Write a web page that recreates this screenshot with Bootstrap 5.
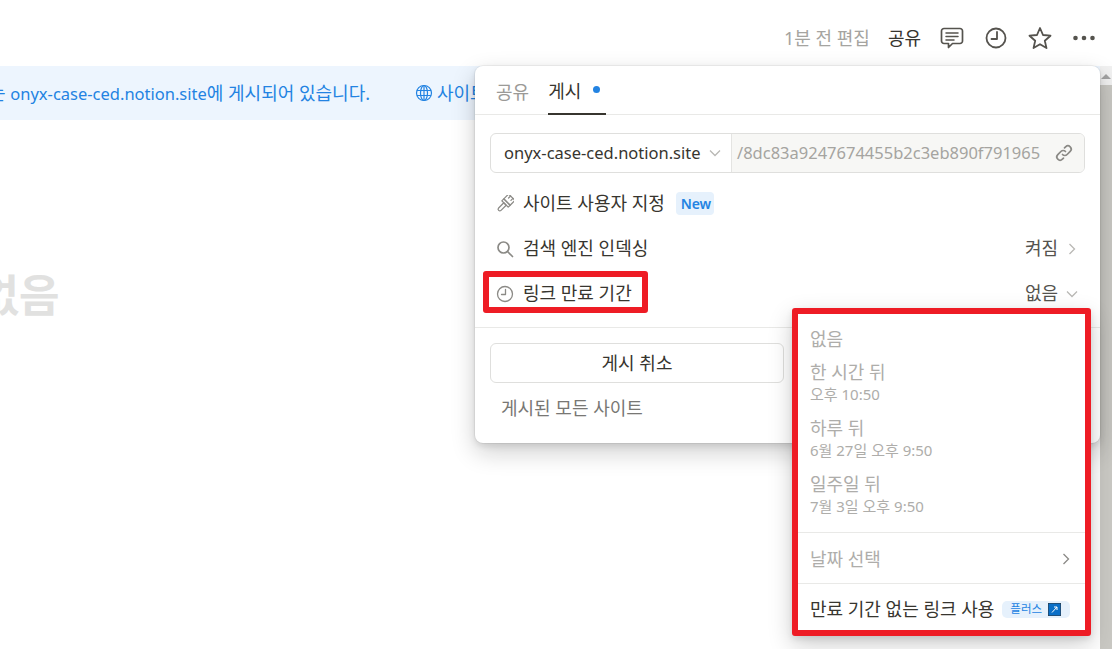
<!DOCTYPE html>
<html lang="ko">
<head>
  <meta charset="UTF-8" />
  <meta name="viewport" content="width=device-width, initial-scale=1.0"/>
  <title>게시</title>
  <link href="https://cdn.jsdelivr.net/npm/bootstrap@5.3.0/dist/css/bootstrap.min.css" rel="stylesheet">
  <style>
    html, body { margin: 0; height: 100%; overflow: hidden; background: #fff; }
    body {
      font-family: "Noto Sans", "Noto Sans CJK KR", sans-serif;
      font-size: 18px;
      color: #37352f;
    }
    .latin-text { font-size: 16.5px; }
    .page-shell { position: relative; width: 1112px; height: 649px; overflow: hidden; }
    .top-bar { height: 66px; padding: 10px 15px 0 0; gap: 18px; }
    .edited-text { color: #a5a4a0; }
    .share-link { color: #37352f; }
    .top-icon { width: 26px; height: 26px; color: #55534e; }
    .under-top { height: 583px; }
    .page-main { min-width: 0; overflow: hidden; }
    .publish-banner { height: 54px; background: #edf5fe; color: #2383e2; white-space: nowrap; overflow: hidden; }
    .banner-text { margin-left: -11px; width: 426px; flex: none; }
    .banner-icon { width: 18px; height: 18px; }
    .doc-title {
      margin: 147px 0 0 -114px;
      font-size: 44px;
      line-height: 56px;
      font-weight: 700;
      color: #e1e1e0;
      white-space: nowrap;
    }
    .fake-scroll { width: 12px; background: #c9c8c3; position: relative; }
    .fake-scroll-top { height: 19px; background: #f1f1f1; display: flex; justify-content: center; padding-top: 8px; }
    .scroll-arrow { width: 0; height: 0; border: 5px solid transparent; border-top: 0; border-bottom: 5px solid #a3a3a3; }

    .publish-pop {
      position: absolute; left: 475px; top: 66px; width: 625px; height: 377px;
      background: #fff; border-radius: 8px;
      box-shadow: 0 0 0 1px rgba(15,15,15,.05), 0 3px 6px rgba(15,15,15,.1), 0 9px 24px rgba(15,15,15,.2);
    }
    .pop-tabs { height: 49px; padding: 0 21px; gap: 19px; border-bottom: 1px solid #e9e9e7; }
    .pop-tab { height: 49px; color: #9b9a97; padding-top: 3px; }
    .pop-tab-on { color: #37352f; border-bottom: 2px solid #37352f; width: 58px; }
    .tab-dot { width: 7px; height: 7px; background: #2383e2; border-radius: 50%; margin-left: 12px; margin-top: -4px; }
    .url-field { margin: 18px 15px 0; height: 40px; border: 1px solid #dfdfdd; border-radius: 6px; overflow: hidden; }
    .url-domain { width: 241px; padding-left: 13px; padding-right: 9px; border-right: 1px solid #e4e4e2; flex: none; white-space: nowrap; }
    .url-path { background: #f7f7f5; color: #a5a4a0; padding: 0 10px 0 5px; white-space: nowrap; overflow: hidden; }
    .opt-rows { padding: 8px 21px 0 21px; }
    .opt-row { height: 45px; }
    .opt-icon { width: 18px; height: 18px; color: #8b8a86; margin-right: 9px; flex: none; }
    .chev { width: 14px; height: 14px; color: #b9b8b5; margin-left: 7px; flex: none; }
    .new-tag { background: #e6f1fc; color: #2383e2; font-size: 14px; font-weight: 600; border-radius: 4px; padding: 0 5px; margin-left: 11px; line-height: 23px; width: 38px; text-align: center; letter-spacing: -0.2px; }
    .side-value { color: #55534e; }
    .pop-foot { margin-top: 11px; border-top: 1px solid #e9e9e7; padding: 15px 0 0 15px; }
    .unpublish-btn {
      width: 294px; height: 40px; padding: 0; font-size: 18px; color: #37352f;
      border: 1px solid #dfdfdd; border-radius: 6px; background: #fff;
    }
    .all-sites { color: #787774; padding: 12px 0 0 11px; }

    .expire-pop {
      position: absolute; left: 792px; top: 308px; width: 299px; height: 328px;
      background: #fff; border: 6px solid #ee1c25; border-radius: 3px;
      box-shadow: 0 3px 6px rgba(15,15,15,.1), 0 9px 24px rgba(15,15,15,.2);
    }
    .expire-list { padding: 13px 0 0 12px; color: #aeadaa; height: 218px; }
    .expire-item { margin-bottom: 11px; line-height: 25px; }
    .expire-none { margin-bottom: 8px; }
    .expire-sub { font-size: 15px; line-height: 22px; margin-top: -2px; }
    .expire-row { height: 51px; border-top: 1px solid #e9e9e7; padding: 0 12px; }
    .date-pick { color: #aeadaa; padding-top: 2px; }
    .plus-tag { background: #e6f1fc; color: #2383e2; font-size: 11.5px; border-radius: 5px; height: 17px; padding: 0 9px 0 8px; margin-left: 8px; gap: 6px; white-space: nowrap; }
    .plus-square { width: 13px; height: 13px; flex: none; }
    .red-frame { position: absolute; left: 483px; top: 271px; width: 165px; height: 42px; border: 6px solid #ee1c25; border-radius: 3px; }
  </style>
</head>
<body>
<div class="page-shell">
  <div class="top-bar d-flex align-items-center justify-content-end">
    <span class="edited-text">1분 전 편집</span>
    <span class="share-link">공유</span>
    <svg class="top-icon" viewBox="0 0 26 26" fill="none" stroke="currentColor" stroke-width="1.700" stroke-linejoin="round" stroke-linecap="round"><path d="M5 3.500h16a2.500 2.500 0 0 1 2.500 2.500v10a2.500 2.500 0 0 1-2.500 2.500h-7.500l-4 4v-4H5A2.500 2.500 0 0 1 2.500 16V6A2.500 2.500 0 0 1 5 3.500z"/><path d="M7 8h12M7 11.500h12M7 15h8" stroke-width="1.500"/></svg>
    <svg class="top-icon" viewBox="0 0 26 26" fill="none" stroke="currentColor" stroke-width="1.800" stroke-linecap="round" stroke-linejoin="round"><circle cx="13" cy="13" r="9.500"/><path d="M14 7v7H8.500"/></svg>
    <svg class="top-icon" viewBox="0 0 26 26" fill="none" stroke="currentColor" stroke-width="1.800" stroke-linejoin="round"><path d="M13 3l3 7 7.500.700-5.700 5 1.700 7.400-6.500-3.900-6.500 3.900 1.700-7.400-5.700-5L10 10z"/></svg>
    <svg class="top-icon" viewBox="0 0 26 26" fill="currentColor"><circle cx="4.500" cy="13" r="2.300"/><circle cx="13" cy="13" r="2.300"/><circle cx="21.500" cy="13" r="2.300"/></svg>
  </div>
  <div class="under-top d-flex">
    <div class="page-main flex-grow-1">
      <div class="publish-banner d-flex align-items-center">
        <span class="banner-text">는 <span class="latin-text">onyx-case-ced.notion.site</span>에 게시되어 있습니다.</span>
        <svg class="banner-icon me-1" viewBox="0 0 18 18" fill="none" stroke="currentColor" stroke-width="1.200"><circle cx="9" cy="9" r="7.500"/><ellipse cx="9" cy="9" rx="3.500" ry="7.500"/><path d="M9 1.500v15M2 6.500h14M2 11.500h14"/></svg>
        <span>사이트 보기</span>
      </div>
      <div class="doc-title">제목 없음</div>
    </div>
    <div class="fake-scroll flex-shrink-0">
      <div class="fake-scroll-top"><div class="scroll-arrow"></div></div>
    </div>
  </div>

  <div class="publish-pop">
    <div class="pop-tabs d-flex">
      <div class="pop-tab d-flex align-items-center">공유</div>
      <div class="pop-tab pop-tab-on d-flex align-items-center flex-shrink-0">게시<span class="tab-dot"></span></div>
    </div>
    <div class="url-field d-flex">
      <div class="url-domain d-flex align-items-center justify-content-between">
        <span class="latin-text">onyx-case-ced.notion.site</span>
        <svg class="chev m-0" viewBox="0 0 14 14" fill="none" stroke="currentColor" stroke-width="1.300"><path d="M2 4.500l5 5 5-5"/></svg>
      </div>
      <div class="url-path flex-grow-1 d-flex align-items-center justify-content-between">
        <span class="latin-text">/8dc83a9247674455b2c3eb890f791965</span>
        <svg width="20" height="20" viewBox="0 0 20 20" fill="none" stroke="#8b8a86" stroke-width="1.700" stroke-linecap="round" class="flex-shrink-0"><path d="M8.500 11.500a3.200 3.200 0 0 0 4.600 0l3.100-3.100a3.250 3.250 0 0 0-4.600-4.600l-1.100 1.100"/><path d="M11.500 8.500a3.200 3.200 0 0 0-4.600 0l-3.100 3.100a3.250 3.250 0 0 0 4.600 4.600l1.100-1.100"/></svg>
      </div>
    </div>
    <div class="opt-rows">
      <div class="opt-row d-flex align-items-center">
        <svg class="opt-icon" viewBox="1 1 16 16" fill="none" stroke="currentColor" stroke-width="1.100" stroke-linejoin="round" stroke-linecap="round"><g transform="rotate(45 9 9)"><path d="M5 .5h8v6H5z"/><path d="M7.500.5v2.500M10.500.5v2.500"/><path d="M5 6.500h8v2.500H5z"/><path d="M7.500 9h3v6.500a1.500 1.500 0 0 1-3 0z"/></g></svg>
        <span>사이트 사용자 지정</span>
        <span class="new-tag">New</span>
      </div>
      <div class="opt-row d-flex align-items-center">
        <svg class="opt-icon" viewBox="0 0 18 18" fill="none" stroke="currentColor" stroke-width="1.700" stroke-linecap="round"><circle cx="7.500" cy="7.500" r="5.500"/><path d="M11.500 11.500l5 5"/></svg>
        <span class="flex-grow-1">검색 엔진 인덱싱</span>
        <span class="side-value">켜짐</span>
        <svg class="chev" viewBox="0 0 14 14" fill="none" stroke="currentColor" stroke-width="1.300"><path d="M4.500 2l5 5-5 5"/></svg>
      </div>
      <div class="opt-row d-flex align-items-center">
        <svg class="opt-icon" viewBox="0 0 18 18" fill="none" stroke="currentColor" stroke-width="1.300" stroke-linecap="round" stroke-linejoin="round"><circle cx="9" cy="9" r="7.500"/><path d="M9.500 4.500v5H5.500"/></svg>
        <span class="flex-grow-1">링크 만료 기간</span>
        <span class="side-value">없음</span>
        <svg class="chev" viewBox="0 0 14 14" fill="none" stroke="currentColor" stroke-width="1.300"><path d="M2 4.500l5 5 5-5"/></svg>
      </div>
    </div>
    <div class="pop-foot">
      <button type="button" class="btn unpublish-btn">게시 취소</button>
      <div class="all-sites">게시된 모든 사이트</div>
    </div>
  </div>

  <div class="red-frame"></div>

  <div class="expire-pop">
    <div class="expire-list">
      <div class="expire-item expire-none">없음</div>
      <div class="expire-item">한 시간 뒤<div class="expire-sub">오후 10:50</div></div>
      <div class="expire-item">하루 뒤<div class="expire-sub">6월 27일 오후 9:50</div></div>
      <div class="expire-item">일주일 뒤<div class="expire-sub">7월 3일 오후 9:50</div></div>
    </div>
    <div class="expire-row date-pick d-flex align-items-center justify-content-between">
      <span>날짜 선택</span>
      <svg class="chev" viewBox="0 0 14 14" fill="none" stroke="#8b8a86" stroke-width="1.300"><path d="M4.500 2l5 5-5 5"/></svg>
    </div>
    <div class="expire-row d-flex align-items-center">
      <span>만료 기간 없는 링크 사용</span>
      <span class="plus-tag d-inline-flex align-items-center">플러스
        <svg class="plus-square" viewBox="0 0 13 13"><rect width="13" height="13" fill="#0a6fc7" stroke="#333" stroke-width="1"/><path d="M4 9.500L9 4M6 4h3v3" fill="none" stroke="#fff" stroke-width="1"/></svg>
      </span>
    </div>
  </div>
</div>
<script src="https://cdn.jsdelivr.net/npm/bootstrap@5.3.0/dist/js/bootstrap.bundle.min.js"></script>
</body>
</html>
